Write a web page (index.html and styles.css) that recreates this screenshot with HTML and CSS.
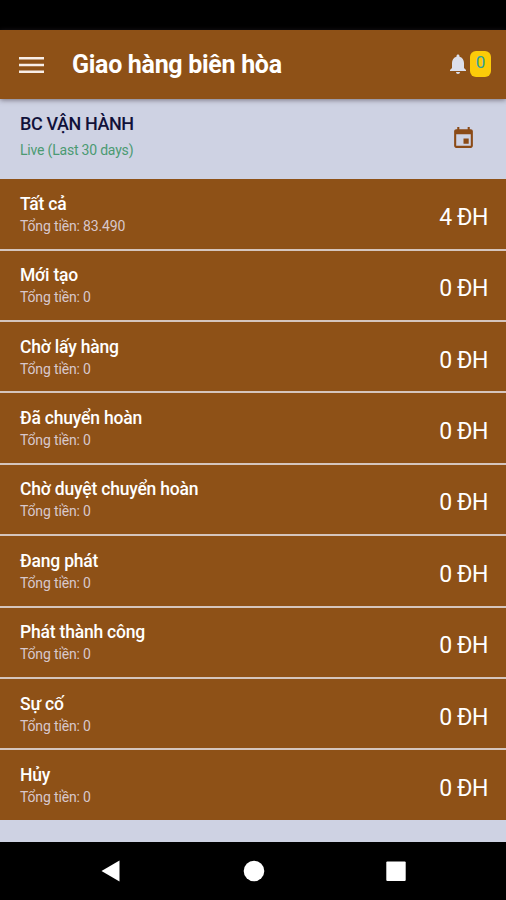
FILE: index.html
```
<!DOCTYPE html>
<html lang="vi">
  <head>
    <meta charset="UTF-8" />
    <meta name="viewport" content="width=device-width, initial-scale=1.0" />
    <title>Giao hàng biên hòa</title>
    <link rel="stylesheet" href="styles.css">
  </head>
  <body>
    <div class="status-bar"></div>

    <header class="app-bar">
      <svg class="menu-icon" width="25" height="16" viewBox="0 0 25 16">
        <path d="M0 0h25v2.4H0zM0 6.8h25v2.4H0zM0 13.6h25V16H0z" fill="#f8eee8" />
      </svg>
      <h1>Giao hàng biên hòa</h1>
      <svg class="bell-icon" width="24" height="24" viewBox="0 0 24 24">
        <path d="M12 22c1.1 0 2-.9 2-2h-4c0 1.1.9 2 2 2zm6-6v-5c0-3.07-1.63-5.64-4.5-6.32V4c0-.83-.67-1.5-1.5-1.5s-1.5.67-1.5 1.5v.68C7.64 5.36 6 7.92 6 11v5l-2 2v1h16v-1l-2-2z" fill="#dcdfec" />
      </svg>
      <span class="badge">0</span>
    </header>

    <section class="office">
      <div>
        <h2>BC VẬN HÀNH</h2>
        <p>Live (Last 30 days)</p>
      </div>
      <svg class="calendar-icon" width="25" height="25" viewBox="0 0 24 24">
        <path d="M17 12h-5v5h5v-5zM16 1v2H8V1H6v2H5c-1.11 0-1.99.9-1.99 2L3 19c0 1.1.89 2 2 2h14c1.1 0 2-.9 2-2V5c0-1.1-.9-2-2-2h-1V1h-2zm3 18H5V8h14v11z" fill="#8b4a16" />
      </svg>
    </section>

    <ul class="orders">
      <li>
        <div>
          <h3>Tất cả</h3>
          <p>Tổng tiền: 83.490</p>
        </div>
        <span class="count">4 ĐH</span>
      </li>
      <li>
        <div>
          <h3>Mới tạo</h3>
          <p>Tổng tiền: 0</p>
        </div>
        <span class="count">0 ĐH</span>
      </li>
      <li>
        <div>
          <h3>Chờ lấy hàng</h3>
          <p>Tổng tiền: 0</p>
        </div>
        <span class="count">0 ĐH</span>
      </li>
      <li>
        <div>
          <h3>Đã chuyển hoàn</h3>
          <p>Tổng tiền: 0</p>
        </div>
        <span class="count">0 ĐH</span>
      </li>
      <li>
        <div>
          <h3>Chờ duyệt chuyển hoàn</h3>
          <p>Tổng tiền: 0</p>
        </div>
        <span class="count">0 ĐH</span>
      </li>
      <li>
        <div>
          <h3>Đang phát</h3>
          <p>Tổng tiền: 0</p>
        </div>
        <span class="count">0 ĐH</span>
      </li>
      <li>
        <div>
          <h3>Phát thành công</h3>
          <p>Tổng tiền: 0</p>
        </div>
        <span class="count">0 ĐH</span>
      </li>
      <li>
        <div>
          <h3>Sự cố</h3>
          <p>Tổng tiền: 0</p>
        </div>
        <span class="count">0 ĐH</span>
      </li>
      <li>
        <div>
          <h3>Hủy</h3>
          <p>Tổng tiền: 0</p>
        </div>
        <span class="count">0 ĐH</span>
      </li>
    </ul>

    <nav class="nav-bar">
      <svg width="22" height="22" viewBox="0 0 22 22">
        <path d="M1.5 11L19.5 0.5v21z" fill="#fff" />
      </svg>
      <svg width="22" height="22" viewBox="0 0 22 22">
        <circle cx="11" cy="11" r="10.3" fill="#fff" />
      </svg>
      <svg width="22" height="22" viewBox="0 0 22 22">
        <rect x="1.3" y="1.5" width="19.4" height="19.4" rx="1" fill="#fff" />
      </svg>
    </nav>
  </body>
</html>
```

FILE: styles.css
```
* {
  box-sizing: border-box;
}
body {
  margin: 0;
  height: 900px;
  display: flex;
  flex-direction: column;
  overflow: hidden;
  font-family: Roboto, "Noto Sans", sans-serif;
  background: #ced2e3;
}
h1,
h2,
h3,
p,
ul {
  margin: 0;
  padding: 0;
}

.status-bar {
  height: 29.5px;
  background: #000;
}

/* Header */
.app-bar {
  height: 69.5px;
  padding: 0 15px 0 19px;
  display: flex;
  align-items: center;
  background: #8e5117;
  box-shadow: 0 1px 5px rgba(60, 50, 60, 0.6);
}
.app-bar h1 {
  flex: 1;
  margin: 1px 0 0 28px;
  font-size: 25px;
  line-height: 30px;
  font-weight: 700;
  letter-spacing: -0.3px;
  color: #fff;
}
.menu-icon {
  margin-top: 1px;
}
.badge {
  width: 21px;
  height: 26px;
  border-radius: 6px;
  text-align: center;
  font-size: 17px;
  line-height: 23px;
  color: #2f9f9c;
  background: #fccb09;
}

/* Office info */
.office {
  height: 80.2px;
  padding: 14px 30px 0 20px;
  display: flex;
  justify-content: space-between;
}
.office h2 {
  font-size: 18px;
  line-height: 22px;
  font-weight: 500;
  letter-spacing: -0.4px;
  color: #11113a;
}
.office p {
  margin-top: 6px;
  font-size: 14px;
  line-height: 18px;
  letter-spacing: -0.2px;
  color: #4b9a72;
}
.calendar-icon {
  margin-top: 13px;
}

/* Order list */
.orders {
  list-style: none;
}
.orders li {
  height: 71.4px;
  padding: 13.6px 18px 0 20px;
  display: flex;
  justify-content: space-between;
  border-bottom: 2px solid #d5c5bd;
  color: #fff;
  background: #8e5117;
}
.orders li:last-child {
  border-color: #ced2e3;
}
.orders h3 {
  font-size: 17.5px;
  line-height: 22px;
  font-weight: 500;
  letter-spacing: -0.2px;
}
.orders p {
  margin-top: 2px;
  font-size: 14px;
  line-height: 18px;
  letter-spacing: -0.15px;
  color: #d8c8cc;
}
.count {
  margin-top: 11px;
  font-size: 23px;
  line-height: 28px;
  letter-spacing: -0.4px;
}

/* Android buttons */
.nav-bar {
  height: 58.5px;
  margin-top: auto;
  padding: 0 99px 0 100px;
  display: flex;
  justify-content: space-between;
  align-items: center;
  background: #000;
}
```
